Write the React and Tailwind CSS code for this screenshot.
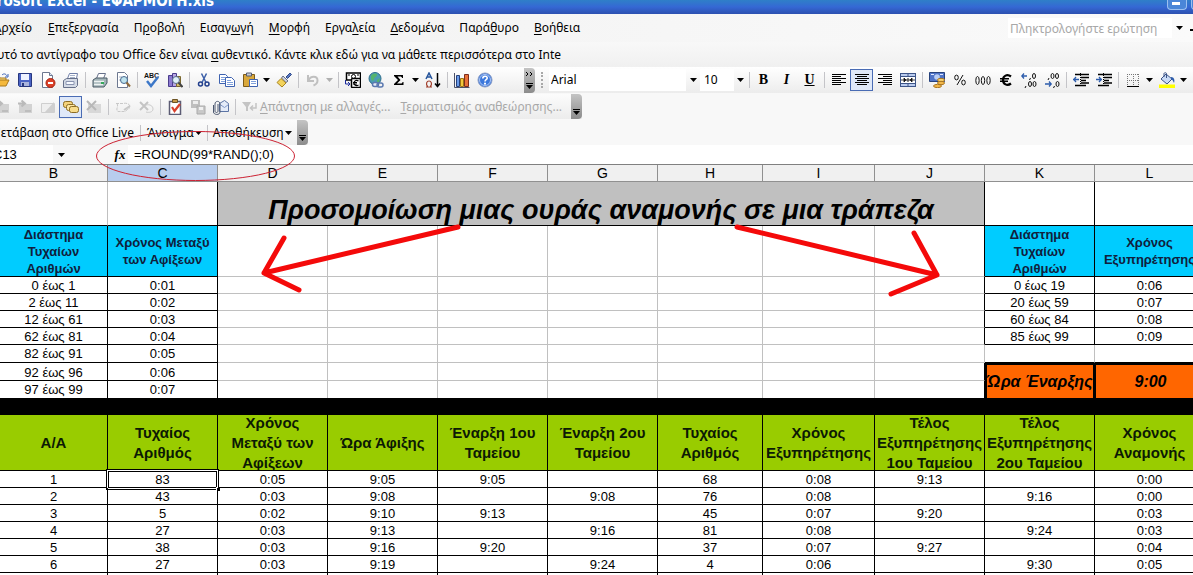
import React from "react";

const UI = "font-['Noto_Sans','Open_Sans',sans-serif]";

function Svg({ children, w = 16, h = 16 }) {
  return (
    <svg width={w} height={h} viewBox={`0 0 ${w} ${h}`} className="shrink-0" aria-hidden="true">
      {children}
    </svg>
  );
}

const Tri = ({ color = "#000" }) => (
  <Svg w={7} h={4}>
    <path d="M0 0h7L3.5 4z" fill={color} />
  </Svg>
);

const textLines = (rows) =>
  rows.map(([x, w], i) => <rect key={i} x={x} y={2 + i * 2} width={w} height="1" fill="#000" />);

const icons = {
  open: (
    <Svg>
      <path d="M1 14V4h4l1 2h6v3" fill="#fbe08a" stroke="#a9781b" />
      <path d="M1 14l3-6h11l-3 6z" fill="#f5b93c" stroke="#a9781b" />
      <path d="M8 3c2-2 4-1 5 1M14 2v3h-3" fill="none" stroke="#3a62b8" />
    </Svg>
  ),
  save: (
    <Svg>
      <path d="M1.5 1.5h13v13h-12l-1-1z" fill="#4a63c4" stroke="#27377f" />
      <rect x="4" y="2" width="8" height="6" fill="#eef2ff" />
      <rect x="4" y="10" width="8" height="4" fill="#aab4dc" />
      <rect x="5" y="11" width="2" height="3" fill="#27377f" />
    </Svg>
  ),
  permission: (
    <Svg>
      <path d="M2.5.5h7l3 3v12h-10z" fill="#fff" stroke="#6d7890" />
      <path d="M9.5.5v3h3" fill="#dde6f5" stroke="#6d7890" />
      <circle cx="10.500" cy="11" r="4.500" fill="#dc4028" stroke="#a82512" />
      <rect x="8" y="10" width="5" height="2" fill="#fff" />
    </Svg>
  ),
  fax: (
    <Svg>
      <path d="M4.5 6.5l2-5h8l-1 5" fill="#fff" stroke="#6f7ea8" />
      <path d="M7 3.5h5M7 5.5h5" stroke="#a8b4cc" />
      <path d="M.5 8.5l3-2h11v7l-2 2H.5z" fill="#d5dbe6" stroke="#66708a" />
      <path d="M3 9.5h8v3H3z" fill="#f6f9ff" stroke="#8a94b0" />
    </Svg>
  ),
  print: (
    <Svg>
      <path d="M4.5 6.5l2-5h7l-2 5" fill="#fff" stroke="#66708a" />
      <path d="M1 8l3-2h11v5l-3 4H1z" fill="#a3b4b8" stroke="#4a5a66" />
      <path d="M2 9.5h10M2 12.5h9" stroke="#eef2f2" strokeWidth="1.5" />
      <rect x="9" y="10" width="3" height="2" fill="#35a85b" />
    </Svg>
  ),
  preview: (
    <Svg>
      <path d="M2.5.5h7l3 3v12h-10z" fill="#fff" stroke="#6d7890" />
      <path d="M4 5h3M4 8h2" stroke="#a9b3c6" />
      <circle cx="9" cy="8" r="3.5" fill="#bfe3ee" stroke="#4a6a90" />
      <path d="M11.5 10.5L15 14.5" stroke="#8d6a3c" strokeWidth="2" />
    </Svg>
  ),
  spelling: (
    <Svg>
      <text x="0" y="6" fontSize="7" fontWeight="700" fontFamily="Liberation Sans" fill="#111">ABC</text>
      <path d="M3 9l4 5 7-9" fill="none" stroke="#3d78c8" strokeWidth="2.5" />
    </Svg>
  ),
  research: (
    <Svg>
      <path d="M1.5 3.5h4v11h-4z" fill="#8c7ad0" stroke="#4a3c8c" />
      <path d="M5.5 1.5h4v13h-4z" fill="#b9a7e4" stroke="#4a3c8c" />
      <path d="M9.500 4.500h4v10h-4z" fill="#d8c06a" stroke="#7a6830" />
      <circle cx="9" cy="8" r="3.500" fill="#dff0f8" stroke="#56698c" />
      <path d="M11.500 10.500l4 4.500" stroke="#444" strokeWidth="2" />
    </Svg>
  ),
  cut: (
    <Svg>
      <path d="M5.500 1.500l4.500 9M10.500 1.500l-4.500 9" stroke="#3c5fa8" strokeWidth="1.500" />
      <circle cx="4.500" cy="12" r="2" fill="none" stroke="#223f8c" strokeWidth="1.500" />
      <circle cx="11" cy="12" r="2" fill="none" stroke="#223f8c" strokeWidth="1.500" />
    </Svg>
  ),
  copy: (
    <Svg>
      <path d="M.5 2.500h6l2 2v7h-8z" fill="#fff" stroke="#3e62b0" />
      <path d="M2 5.500h4M2 7.500h5M2 9.500h5" stroke="#7fa0dc" />
      <path d="M6.500 5.500h6l3 3v6h-9z" fill="#fff" stroke="#3e62b0" />
      <path d="M8 8.500h4M8 10.500h6M8 12.500h6" stroke="#7fa0dc" />
    </Svg>
  ),
  paste: (
    <Svg>
      <path d="M1.500 2.500h11v12h-11z" fill="#d9a83c" stroke="#7c5a18" />
      <path d="M4.500 1h5v3h-5z" fill="#c9ccd4" stroke="#555c70" />
      <path d="M7.500 7.500h8v7h-8z" fill="#fff" stroke="#3e62b0" />
      <path d="M9 9.500h5M9 11.500h5" stroke="#7fa0dc" />
    </Svg>
  ),
  brush: (
    <Svg>
      <path d="M10 5l4-4 1.500 1.500-4 4z" fill="#5a78c0" stroke="#2f4a8c" />
      <path d="M7 4l5 5-2 1.500L5.500 6z" fill="#d0d4e0" stroke="#6a7288" />
      <path d="M5 6.500l5 4.500-4 4-5-4.500z" fill="#f3d35c" stroke="#a88420" />
    </Svg>
  ),
  undo: (
    <Svg>
      <path d="M3 3v6h6M3.500 8.500c2-5 9-5 9 0 0 2-1.500 4-4 5" fill="none" stroke="#c0c0c0" strokeWidth="2" />
    </Svg>
  ),
  euroConvert: (
    <Svg>
      <rect x="1.500" y="1" width="14" height="7" fill="#fff" stroke="#000" strokeWidth="1.500" />
      <circle cx="8.500" cy="4.500" r="2" fill="none" stroke="#000" />
      <path d="M3 3h2M12 3h2" stroke="#000" />
      <rect x="6.500" y="6.500" width="9" height="9" rx="1" fill="#fff" stroke="#000" strokeWidth="1.500" />
      <path d="M13.500 9c-2.500-1.500-4.500 0-4.500 2s2 3.500 4.500 2M8 10.500h4M8 12h4" fill="none" stroke="#000" strokeWidth="1.200" />
      <path d="M.5 8v4h4M3 10l2 2-2 2" fill="none" stroke="#1b2a9c" />
    </Svg>
  ),
  globe: (
    <Svg>
      <circle cx="7" cy="6.500" r="6" fill="#4c9cb4" stroke="#2c6c8c" />
      <path d="M3 4c2-3 6-3 6-1s-3 2-3 4-2 2-3 0zM9 8l3-2-1 4-2 1z" fill="#54b46c" />
      <rect x="4.500" y="10.500" width="6" height="4" rx="2" fill="#e6ecf8" stroke="#5a78b0" strokeWidth="1.500" />
      <rect x="9" y="11" width="6" height="4" rx="2" fill="none" stroke="#5a78b0" strokeWidth="1.500" />
    </Svg>
  ),
  sigma: (
    <Svg>
      <path d="M3 3h9v3h-1c0-1-1-1.500-2-1.500H6.500L9.500 8l-3.500 3.500h3.500c1 0 2-.5 2-1.500h1v3H3v-1l4-4-4-4z" fill="#000" />
    </Svg>
  ),
  sort: (
    <Svg>
      <path d="M1 7l3-6 3 6M2.500 5h3" fill="none" stroke="#27559c" strokeWidth="1.500" />
      <path d="M1 15h2c-3-3-1-6 1-6s4 3 1 6h2" fill="none" stroke="#a03c28" strokeWidth="1.200" />
      <path d="M12.500 1v13M10 11.500l2.500 3 2.500-3" fill="none" stroke="#000" strokeWidth="1.500" />
    </Svg>
  ),
  chart: (
    <Svg>
      <path d="M.5 1v14.500H15.500" fill="none" stroke="#4a5068" />
      <path d="M2.500 3.500h3v11h-3z" fill="#6a9ae8" stroke="#27427c" />
      <path d="M6.500 6.500h3v8h-3z" fill="#f4c83c" stroke="#9c7414" />
      <path d="M10.500 2.500h4v12h-4z" fill="#e87038" stroke="#7c2c1c" />
    </Svg>
  ),
  help: (
    <Svg>
      <circle cx="8" cy="8" r="7" fill="#3c78dc" stroke="#8a9cc4" />
      <circle cx="8" cy="8" r="5.500" fill="none" stroke="#dce8ff" strokeWidth=".7" />
      <path d="M5.800 6.500c0-3 4.400-3 4.400-.5 0 1.600-2.200 1.600-2.200 3.400" fill="none" stroke="#fff" strokeWidth="1.600" />
      <rect x="7" y="10.700" width="2" height="1.800" fill="#fff" />
    </Svg>
  ),
  left: <Svg>{textLines([[1, 14], [1, 9], [1, 14], [1, 9], [1, 14], [1, 9]])}</Svg>,
  center: <Svg>{textLines([[1, 14], [3, 10], [1, 14], [3, 10], [1, 14], [3, 10]])}</Svg>,
  right: <Svg>{textLines([[1, 14], [6, 9], [1, 14], [6, 9], [1, 14], [6, 9]])}</Svg>,
  merge: (
    <Svg>
      <rect x=".5" y="1.500" width="15" height="13" fill="#b9cbee" stroke="#3c5488" />
      <path d="M1 4.500h14M1 11.500h14M8 2v2.500M8 12v2.500" stroke="#3c5488" />
      <rect x="1" y="5" width="14" height="6" fill="#fff" />
      <path d="M1 8h4M15 8h-4M4 6v4l2-2zM12 6v4l-2-2z" stroke="#111" strokeWidth=".8" fill="#111" />
      <circle cx="8" cy="8" r="1.200" fill="none" stroke="#111" />
    </Svg>
  ),
  currency: (
    <Svg>
      <path d="M.5.5h15v9H.5z" fill="#4f74c8" stroke="#27427c" />
      <circle cx="8" cy="5" r="2.800" fill="#b9cdf4" />
      <path d="M2 2.500h3M11 2.500h3" stroke="#dfe8ff" />
      <ellipse cx="12" cy="8" rx="3.500" ry="1.700" fill="#f7d372" stroke="#a87420" />
      <ellipse cx="12" cy="11" rx="3.500" ry="1.700" fill="#f2b84a" stroke="#a87420" />
      <ellipse cx="8.500" cy="14" rx="4" ry="1.600" fill="#f2b84a" stroke="#a87420" />
    </Svg>
  ),
  percent: (
    <Svg>
      <path d="M11 3L5 13" stroke="#111" />
      <ellipse cx="4.500" cy="5.500" rx="1.800" ry="2.400" fill="none" stroke="#111" />
      <ellipse cx="11.500" cy="10.500" rx="1.800" ry="2.400" fill="none" stroke="#111" />
    </Svg>
  ),
  thousands: (
    <Svg>
      {[2.5, 8, 13.5].map((x) => (
        <ellipse key={x} cx={x} cy="8.500" rx="1.700" ry="4" fill="none" stroke="#111" />
      ))}
    </Svg>
  ),
  euro: (
    <Svg>
      <path d="M13 4.500C9 1.500 5 4 5 8s4 6.500 8 3.500" fill="none" stroke="#000" strokeWidth="2.200" />
      <path d="M2 6.700h9M2 9.300h8" stroke="#000" strokeWidth="1.400" />
    </Svg>
  ),
  addDecimal: (
    <Svg>
      <path d="M1 4h5M3 1.500L.8 4 3 6.500" fill="none" stroke="#2c5cac" strokeWidth="1.300" />
      <ellipse cx="13" cy="4" rx="1.500" ry="2.500" fill="none" stroke="#111" />
      <ellipse cx="9" cy="12" rx="1.500" ry="2.500" fill="none" stroke="#111" />
      <ellipse cx="13.500" cy="12" rx="1.500" ry="2.500" fill="none" stroke="#111" />
      <path d="M9.500 6l-1 2M5 14l-1 2" stroke="#111" />
    </Svg>
  ),
  removeDecimal: (
    <Svg>
      <path d="M1 12h6M5 9.500L7.200 12 5 14.500" fill="none" stroke="#2c5cac" strokeWidth="1.300" />
      <ellipse cx="8.500" cy="4" rx="1.500" ry="2.500" fill="none" stroke="#111" />
      <ellipse cx="13" cy="4" rx="1.500" ry="2.500" fill="none" stroke="#111" />
      <ellipse cx="13.500" cy="12" rx="1.500" ry="2.500" fill="none" stroke="#111" />
      <path d="M5 6l-1 2M10.500 14l-1 2" stroke="#111" />
    </Svg>
  ),
  outdent: (
    <Svg>
      <path d="M2 2.500h14M8 5.500h8M8 8.500h5M8 11h8M2 13.500h11" stroke="#000" strokeWidth="1.500" />
      <path d="M0 7.500h6M3 5L.8 7.500 3 10" fill="none" stroke="#2c5cac" strokeWidth="1.300" />
      <path d="M7.500 1v14" stroke="#000" strokeDasharray="1 1" />
    </Svg>
  ),
  indent: (
    <Svg>
      <path d="M2 2.500h14M8 5.500h8M8 8.500h5M8 11h8M2 13.500h11" stroke="#000" strokeWidth="1.500" />
      <path d="M0 7.500h6M3 5l2.200 2.500L3 10" fill="none" stroke="#2c5cac" strokeWidth="1.300" />
      <path d="M7.500 1v14" stroke="#000" strokeDasharray="1 1" />
    </Svg>
  ),
  borders: (
    <Svg>
      <path d="M2 2.500h12M2 8.500h12M2.500 2v12M8.500 2v12M13.500 2v12" stroke="#777" strokeDasharray="1 1" />
      <path d="M2 14.500h12" stroke="#000" />
    </Svg>
  ),
  fill: (
    <Svg>
      <path d="M7 2l6 5-5 5-6-5z" fill="#c9daf5" stroke="#3c5488" />
      <path d="M5 5V1.500c0-1 2.500-1 2.500 0V6" fill="none" stroke="#3c5488" />
      <path d="M12 5c3 0 4 3 3 6-1-2-1-3-3-4z" fill="#2c5cac" />
      <rect x="0" y="12.500" width="16" height="3.500" fill="#ffff00" />
    </Svg>
  ),
  note: (
    <Svg>
      <path d="M2 5h13v9H2z" fill="#d2d2d2" />
      <path d="M1 4.500h6M4.500 1.500L8 4.500 4.500 7.500" fill="none" stroke="#bababa" strokeWidth="2" />
      <path d="M8 11h6v2H8z" fill="#bdbdbd" />
    </Svg>
  ),
  noteEdit: (
    <Svg>
      <path d="M1.500 4.500h13v9h-13z" fill="#efefef" stroke="#cfcfcf" />
      <path d="M14 3L5 13h9z" fill="#cfcfcf" />
    </Svg>
  ),
  notes: (
    <Svg>
      <rect x=".5" y="2.500" width="9" height="6" rx="2" fill="#f3d27c" stroke="#8c6c24" />
      <rect x="3.500" y="5.500" width="9" height="6" rx="2" fill="#fbe6a4" stroke="#8c6c24" />
      <rect x="6.500" y="7.500" width="9" height="6" rx="2" fill="#f7dc8c" stroke="#8c6c24" />
    </Svg>
  ),
  noteDelete: (
    <Svg>
      <path d="M2 5h13v9H2z" fill="#d8d8d8" />
      <path d="M1 2l9 9M10 2l-9 9" stroke="#b8b8b8" strokeWidth="2" />
    </Svg>
  ),
  ink: (
    <Svg>
      <path d="M1 4.500h7c4-1 7 1 7 3M2 4.500c2 3-2 6 1 8h7l5-4" fill="none" stroke="#c8c8c8" strokeDasharray="3 1" />
      <path d="M9 11l6-4" stroke="#c8c8c8" strokeWidth="2" />
    </Svg>
  ),
  inkDelete: (
    <Svg>
      <path d="M2 3l8 8M10 3l-8 8" stroke="#c4c4c4" strokeWidth="2" />
      <path d="M8 6c4-1 7 1 7 4s-4 4-7 3" fill="none" stroke="#ccc" />
    </Svg>
  ),
  task: (
    <Svg>
      <path d="M2.500 2.500h11v13h-11z" fill="#fff" stroke="#5c5c74" strokeWidth="1.500" />
      <path d="M5.500.5h5v3h-5z" fill="#c89848" stroke="#6c5424" />
      <path d="M5 8l2.500 4L13 5" fill="none" stroke="#d8402c" strokeWidth="2.200" />
    </Svg>
  ),
  update: (
    <Svg>
      <path d="M1 1h9v8H1z" fill="#bfbfbf" />
      <path d="M3 2h5v3H3z" fill="#eee" />
      <path d="M7 7h8v8H7z" fill="#c8c8c8" stroke="#aaa" />
      <path d="M9 8h4v3H9z" fill="#f0f0f0" />
    </Svg>
  ),
  mail: (
    <Svg>
      <path d="M6.500 4.500l5-3 4 3v8h-9z" fill="#e4ebf8" stroke="#5c74a4" />
      <path d="M7 5.500l4.500 3 4-3" fill="none" stroke="#7f97c8" />
      <path d="M5 5v7c0 2-3 2-3 0V5c0-3.500 5-3.500 5 0v8c0 3.500-6.500 3-6.500 0V6" fill="none" stroke="#4c5870" />
    </Svg>
  ),
  reply: (
    <Svg>
      <path d="M0 3h9L6 8v4H4V8z" fill="#c4c4c4" />
      <path d="M14 4v5H9M11 6.500L8.500 9l2.500 2.500" fill="none" stroke="#c4c4c4" strokeWidth="1.500" />
    </Svg>
  ),
  bold: <span className="font-['Liberation_Serif',serif] text-[14px] font-black">B</span>,
  italic: <span className="font-['Liberation_Serif',serif] text-[14px] font-bold italic">I</span>,
  underline: <span className="font-['Liberation_Serif',serif] text-[14px] font-bold underline">U</span>,
};

function Tool({ icon, label, active }) {
  return (
    <button
      type="button"
      aria-label={label}
      className={`flex h-[22px] w-[23px] shrink-0 items-center justify-center ${
        active ? "border border-[#4a6cb4] bg-[#dfe8f8]" : ""
      }`}
    >
      {icons[icon]}
    </button>
  );
}

const Drop = ({ label, color }) => (
  <button type="button" aria-label={label} className="flex h-[22px] w-[11px] shrink-0 items-center justify-center">
    <Tri color={color} />
  </button>
);

const Sep = () => (
  <span className="flex w-[6px] shrink-0 justify-center">
    <span className="h-4 w-px bg-[#c4c4c8]" />
  </span>
);

function More({ arrows }) {
  return (
    <button
      type="button"
      aria-label="Περισσότερα κουμπιά"
      className="flex h-[25px] w-[11px] shrink-0 flex-col items-center justify-between rounded-r bg-linear-to-b from-[#c4c4c4] to-[#8c8c8c] py-[4px]"
    >
      <Svg w={7} h={5}>{arrows && <path d="M0 0l2 2-2 2M4 0l2 2-2 2" stroke="#000" fill="none" />}</Svg>
      <Svg w={7} h={6}>
        <path d="M0 .5h7" stroke="#000" />
        <path d="M0 2h7L3.500 6z" fill="#000" />
      </Svg>
    </button>
  );
}

const menus = [
  ["", "Α", "ρχείο"],
  ["", "Ε", "πεξεργασία"],
  ["Π", "ρ", "οβολή"],
  ["Εισαγ", "ω", "γή"],
  ["", "Μ", "ορφή"],
  ["Εργα", "λ", "εία"],
  ["", "Δ", "εδομένα"],
  ["Παρά", "θ", "υρο"],
  ["", "Β", "οήθεια"],
];

function MenuButton({ parts }) {
  return (
    <button type="button" className="shrink-0 whitespace-nowrap">
      {parts[0]}
      <span className="underline underline-offset-2">{parts[1]}</span>
      {parts[2]}
    </button>
  );
}

const columns = [
  ["B", "w-[108px]"],
  ["C", "w-[110px]"],
  ["D", "w-[110px]"],
  ["E", "w-[110px]"],
  ["F", "w-[110px]"],
  ["G", "w-[110px]"],
  ["H", "w-[105px]"],
  ["I", "w-[112px]"],
  ["J", "w-[110px]"],
  ["K", "w-[110px]"],
  ["L", "w-[110px]"],
];

const GRAY = "border-r border-b border-[#c0c0c0]";
const BLACK = "border-r border-b border-black";
const EDGE = "border-r border-b border-r-black border-b-[#c0c0c0]";
const VALUE = "border-r border-b border-black px-0 pt-px pb-0 leading-[15px]";

const arrivals = [
  ["0 έως 1", "0:01", "0 έως 19", "0:06"],
  ["2 έως 11", "0:02", "20 έως 59", "0:07"],
  ["12 έως 61", "0:03", "60 έως 84", "0:08"],
  ["62 έως 81", "0:04", "85 έως 99", "0:09"],
];

const headings = [
  ["Α/Α"],
  ["Τυχαίος", "Αριθμός"],
  ["Χρόνος", "Μεταξύ των", "Αφίξεων"],
  ["Ώρα Άφιξης"],
  ["Έναρξη 1ου", "Ταμείου"],
  ["Έναρξη 2ου", "Ταμείου"],
  ["Τυχαίος", "Αριθμός"],
  ["Χρόνος", "Εξυπηρέτησης"],
  ["Τέλος", "Εξυπηρέτησης", "1ου Ταμείου"],
  ["Τέλος", "Εξυπηρέτησης", "2ου Ταμείου"],
  ["Χρόνος", "Αναμονής"],
];

const simulation = [
  ["1", "83", "0:05", "9:05", "9:05", "", "68", "0:08", "9:13", "", "0:00"],
  ["2", "43", "0:03", "9:08", "", "9:08", "76", "0:08", "", "9:16", "0:00"],
  ["3", "5", "0:02", "9:10", "9:13", "", "45", "0:07", "9:20", "", "0:03"],
  ["4", "27", "0:03", "9:13", "", "9:16", "81", "0:08", "", "9:24", "0:03"],
  ["5", "38", "0:03", "9:16", "9:20", "", "37", "0:07", "9:27", "", "0:04"],
  ["6", "27", "0:03", "9:19", "", "9:24", "4", "0:06", "", "9:30", "0:05"],
  ["", "", "", "", "", "", "", "", "", "", ""],
];

const blanks = (from, to) =>
  Array.from({ length: to - from }, (_, i) => (
    <td key={`blank${from + i}`} className={from + i === 8 ? EDGE : GRAY} />
  ));

const BlueHead = ({ lines }) => (
  <th scope="col" className={`${BLACK} bg-[#00ccff] p-0 font-bold text-[#10203c]`}>
    <div className="flex h-[50px] flex-col justify-center overflow-hidden leading-[17px]">
      {lines.map((l) => (
        <div key={l} className="shrink-0 whitespace-nowrap">{l}</div>
      ))}
    </div>
  </th>
);

function Sheet() {
  return (
    <table className="w-[1205px] table-fixed border-separate border-spacing-0 border-t border-[#808080] bg-white text-center font-['Liberation_Sans',Arial,sans-serif] text-[13px] leading-4 text-black">
      <thead>
        <tr className="h-[17px]">
          {columns.map(([c, w]) => (
            <th
              key={c}
              scope="col"
              className={`${w} border-r border-b border-[#909090] p-0 text-[14px] font-normal ${
                c === "C" ? "bg-[#b8cdee]" : "bg-[#f0f0f0]"
              }`}
            >
              {c}
            </th>
          ))}
        </tr>
      </thead>
      <tbody>
        <tr className="h-[44px]">
          <td className="border-r border-b border-r-[#c0c0c0] border-b-black" />
          <td className={BLACK} />
          <td colSpan={7} className={`${BLACK} bg-[#c0c0c0] p-0 align-bottom text-[27px] leading-[30px] font-bold whitespace-nowrap italic`}>
            Προσομοίωση μιας ουράς αναμονής σε μια τράπεζα
          </td>
          <td className={BLACK} />
          <td className={BLACK} />
        </tr>
        <tr className="h-[51px]">
          <BlueHead lines={["Διάστημα", "Τυχαίων", "Αριθμών"]} />
          <BlueHead lines={["Χρόνος Μεταξύ", "των Αφίξεων"]} />
          {blanks(2, 9)}
          <BlueHead lines={["Διάστημα", "Τυχαίων", "Αριθμών"]} />
          <BlueHead lines={["Χρόνος", "Εξυπηρέτησης"]} />
        </tr>
        {arrivals.map((r) => (
          <tr key={r[0]} className="h-[17px]">
            <td className={VALUE}>{r[0]}</td>
            <td className={VALUE}>{r[1]}</td>
            {blanks(2, 9)}
            <td className={VALUE}>{r[2]}</td>
            <td className={VALUE}>{r[3]}</td>
          </tr>
        ))}
        <tr className="h-[18px]">
          <td className={`${BLACK} p-0`}>82 έως 91</td>
          <td className={`${BLACK} p-0`}>0:05</td>
          {blanks(2, 8)}
          <td className={GRAY} />
          <td className="border-r border-b border-r-[#c0c0c0] border-b-black" />
          <td className="border-r border-b border-r-[#c0c0c0] border-b-black" />
        </tr>
        <tr className="h-[18px]">
          <td className={VALUE}>92 έως 96</td>
          <td className={VALUE}>0:06</td>
          {blanks(2, 9)}
          <td rowSpan={2} className="border-t-2 border-r-2 border-l-2 border-black bg-[#ff6600] p-0 text-[16px] font-bold whitespace-nowrap italic">
            Ώρα Έναρξης
          </td>
          <td rowSpan={2} className="border-t-2 border-l border-black bg-[#ff6600] p-0 text-[16px] font-bold italic">
            9:00
          </td>
        </tr>
        <tr className="h-[17px]">
          <td className="border-r border-black p-0">97 έως 99</td>
          <td className="border-r border-black p-0">0:07</td>
          {[2, 3, 4, 5, 6, 7].map((i) => (
            <td key={i} className="border-r border-[#c0c0c0]" />
          ))}
          <td className="border-r border-black" />
        </tr>
        <tr className="h-[17px]">
          <td colSpan={11} className="bg-black p-0" />
        </tr>
        <tr className="h-[56px]">
          {headings.map((lines, i) => (
            <th key={i} scope="col" className={`${BLACK} bg-[#99cc00] p-0 text-[15px] font-bold text-[#0c1a04]`}>
              <div className="flex h-[55px] flex-col items-center justify-center overflow-hidden leading-5">
                {lines.map((l) => (
                  <div key={l} className="shrink-0 whitespace-nowrap">{l}</div>
                ))}
              </div>
            </th>
          ))}
        </tr>
        {simulation.map((r, ri) => (
          <tr key={ri} className="h-[17px]">
            {r.map((v, ci) => (
              <td key={ci} className={`${VALUE} relative`}>
                {v}
                {ri === 0 && ci === 1 && (
                  <div className="absolute -inset-x-[2px] -top-[2px] -bottom-[3px] border border-black">
                    <div className="h-full border border-white">
                      <div className="h-full border border-black" />
                    </div>
                    <div className="absolute -right-[3px] -bottom-[3px] size-[5px] border border-white bg-black" />
                  </div>
                )}
              </td>
            ))}
          </tr>
        ))}
      </tbody>
    </table>
  );
}

function Annotations() {
  return (
    <svg width="1193" height="575" viewBox="0 0 1193 575" className="pointer-events-none absolute top-0 left-0" aria-hidden="true">
      <ellipse cx="195.500" cy="156" rx="99" ry="24.500" fill="none" stroke="#cc2233" strokeWidth="1" />
      <g fill="none" stroke="#f40a0a" strokeWidth="5" strokeLinecap="round" strokeLinejoin="round">
        <path d="M458 227L264 273M284 238L264 273L299 290" />
        <path d="M737 227L937 275M914 233L937 275L891 294" />
      </g>
    </svg>
  );
}

export default function App() {
  return (
    <div className={`relative h-screen overflow-hidden bg-[#f8f8f8] text-[12px] leading-4 text-black ${UI}`}>
      <header className="flex h-[14px] items-start justify-between overflow-hidden bg-linear-to-b from-[#2f7fc8] via-[#3568d4] to-[#2c50b0]">
        <h1 className="-mt-[7px] flex w-[214px] shrink-0 justify-end font-['DejaVu_Sans_Condensed','DejaVu_Sans',sans-serif] text-[15px] leading-4 font-bold whitespace-nowrap text-white">
          Microsoft Excel - ΕΦΑΡΜΟΓΗ.xls
        </h1>
        <div className="-mr-[18px] flex gap-1">
          <button type="button" aria-label="Ελαχιστοποίηση" className="flex h-[10px] w-5 items-start rounded-b-sm border border-t-0 border-[#9cc0f0] bg-[#4a86d8] px-1 pt-[2px]">
            <span className="h-[3px] w-2 bg-white" />
          </button>
          <button type="button" aria-label="Επαναφορά" className="h-[10px] w-5 rounded-b-sm border border-t-0 border-[#9cc0f0] bg-[#4a86d8]" />
        </div>
      </header>

      <nav className="flex h-[28px] items-center bg-linear-to-r from-[#f1f1f1] to-[#fafafa]">
        <div className="flex w-8 shrink-0 justify-end">
          <MenuButton parts={menus[0]} />
        </div>
        <div className="flex flex-1 gap-[15px] pl-4">
          {menus.slice(1).map((m) => (
            <MenuButton key={m[1]} parts={m} />
          ))}
        </div>
        <input
          type="text"
          aria-label="Πληκτρολογήστε ερώτηση"
          placeholder="Πληκτρολογήστε ερώτηση"
          className="h-5 w-[164px] bg-white px-[2px] placeholder:text-[#a8a8a8]"
        />
        <button type="button" aria-label="Λίστα ερωτήσεων" className="flex w-[15px] justify-center">
          <Tri />
        </button>
        <span className="mt-1 ml-[3px] h-[2px] w-[3px] bg-black" />
      </nav>

      <div className="flex h-[25px] items-center bg-linear-to-b from-[#f8f8f8] to-[#f0f0f0]">
        <a href="#genuine" className="flex w-[561px] justify-end whitespace-nowrap">
          <span>
            Αυτό το αντίγραφο του Office δεν είναι <u className="underline-offset-2">α</u>υθεντικό. Κάντε κλικ εδώ για να μάθετε περισσότερα στο Inte
          </span>
        </a>
      </div>

      <div className="flex h-[26px] items-center bg-linear-to-b from-white to-[#ececec]">
        <div className="-ml-[10px] flex items-center">
          <Tool icon="open" label="Άνοιγμα" />
          <Tool icon="save" label="Αποθήκευση" />
          <Tool icon="permission" label="Δικαιώματα" />
          <Tool icon="fax" label="Φαξ" />
          <Sep />
          <Tool icon="print" label="Εκτύπωση" />
          <Tool icon="preview" label="Προεπισκόπηση" />
          <Sep />
          <Tool icon="spelling" label="Ορθογραφία" />
          <Tool icon="research" label="Έρευνα" />
          <Sep />
          <Tool icon="cut" label="Αποκοπή" />
          <Tool icon="copy" label="Αντιγραφή" />
          <Tool icon="paste" label="Επικόλληση" />
          <Drop label="Επιλογές επικόλλησης" />
          <Tool icon="brush" label="Πινέλο μορφοποίησης" />
          <Sep />
          <Tool icon="undo" label="Αναίρεση" />
          <Drop label="Επιλογές αναίρεσης" color="#b0b0b0" />
          <Sep />
          <Tool icon="euroConvert" label="Μετατροπή ευρώ" />
          <Tool icon="globe" label="Υπερ-σύνδεση" />
          <Tool icon="sigma" label="Αυτόματη άθροιση" />
          <Drop label="Συναρτήσεις" />
          <Tool icon="sort" label="Ταξινόμηση" />
          <Sep />
          <Tool icon="chart" label="Γράφημα" />
          <Tool icon="help" label="Βοήθεια" />
        </div>
        <div className="ml-7 flex items-center">
          <More arrows />
          <span className="mx-[6px] h-4 border-l-2 border-dotted border-[#a8a8a8]" />
          <select aria-label="Γραμματοσειρά" className="h-[22px] w-[137px] appearance-none bg-white px-[2px] text-[12px]">
            <option>Arial</option>
          </select>
          <span className="flex w-[14px] justify-center"><Tri /></span>
          <select aria-label="Μέγεθος" className="h-[22px] w-[34px] appearance-none bg-white px-1 text-[12px]">
            <option>10</option>
          </select>
          <span className="flex w-[12px] justify-center"><Tri /></span>
          <Sep />
          <Tool icon="bold" label="Έντονα" />
          <Tool icon="italic" label="Πλάγια" />
          <Tool icon="underline" label="Υπογράμμιση" />
          <Sep />
          <Tool icon="left" label="Στοίχιση αριστερά" />
          <Tool icon="center" label="Στοίχιση στο κέντρο" active />
          <Tool icon="right" label="Στοίχιση δεξιά" />
          <Tool icon="merge" label="Συγχώνευση" />
          <Sep />
          <Tool icon="currency" label="Νόμισμα" />
          <Tool icon="percent" label="Ποσοστό" />
          <Tool icon="thousands" label="Χιλιάδες" />
          <Tool icon="euro" label="Ευρώ" />
          <Tool icon="addDecimal" label="Αύξηση δεκαδικών" />
          <Tool icon="removeDecimal" label="Μείωση δεκαδικών" />
          <Sep />
          <Tool icon="outdent" label="Μείωση εσοχής" />
          <Tool icon="indent" label="Αύξηση εσοχής" />
          <Sep />
          <Tool icon="borders" label="Περιγράμματα" />
          <Drop label="Επιλογές περιγράμματος" />
          <Tool icon="fill" label="Χρώμα γεμίσματος" />
          <Drop label="Επιλογές χρώματος" />
        </div>
      </div>

      <div className="flex h-[27px] items-center">
        <div className="flex items-center bg-linear-to-b from-[#fcfcfc] to-[#ececec] text-[#a8a8a8]">
          <div className="-ml-[10px] flex items-center">
            <Tool icon="note" label="Προηγούμενο σχόλιο" />
            <Tool icon="note" label="Επόμενο σχόλιο" />
            <Tool icon="noteEdit" label="Επεξεργασία σχολίου" />
            <Tool icon="notes" label="Εμφάνιση όλων" active />
            <Tool icon="noteDelete" label="Διαγραφή σχολίου" />
            <Sep />
            <Tool icon="ink" label="Γραφή" />
            <Tool icon="inkDelete" label="Διαγραφή γραφής" />
            <Sep />
            <Tool icon="task" label="Εργασία" />
            <Tool icon="update" label="Ενημέρωση" />
            <Tool icon="mail" label="Αποστολή" />
            <Sep />
          </div>
          <button type="button" className="ml-1 flex items-center gap-[2px] whitespace-nowrap">
            {icons.reply}
            <span><u className="underline-offset-2">Α</u>πάντηση με αλλαγές...</span>
          </button>
          <button type="button" className="mr-[9px] ml-[10px] whitespace-nowrap">
            <u className="underline-offset-2">Τ</u>ερματισμός αναθεώρησης...
          </button>
          <More />
        </div>
      </div>

      <div className="flex h-[25px] items-center">
        <div className="flex items-center bg-linear-to-b from-[#fcfcfc] to-[#f0f0f0]">
          <div className="flex w-[134px] shrink-0 justify-end overflow-hidden">
            <button type="button" className="shrink-0 whitespace-nowrap">Μετάβαση στο Office Live</button>
          </div>
          <span className="mx-[6px] h-4 w-px bg-[#c4c4c8]" />
          <button type="button" className="flex items-center gap-px">Άνοιγμα <Tri /></button>
          <span className="mx-[5px] h-4 w-px bg-[#c4c4c8]" />
          <button type="button" className="mr-[5px] flex items-center gap-px">Αποθήκευση <Tri /></button>
          <More />
        </div>
      </div>

      <div className="flex h-[19px] items-center font-['Liberation_Sans',Arial,sans-serif] text-[13px]">
        <input type="text" aria-label="Πλαίσιο ονόματος" defaultValue="C13" className="-ml-[7px] h-full w-[60px] bg-white" />
        <button type="button" aria-label="Λίστα ονομάτων" className="flex w-[17px] justify-center"><Tri /></button>
        <button type="button" aria-label="Εισαγωγή συνάρτησης" className="ml-[42px] w-4 text-center font-['Liberation_Serif',serif] text-[13px] font-bold italic">
          fx
        </button>
        <input type="text" aria-label="Γραμμή τύπων" defaultValue="=ROUND(99*RAND();0)" className="h-full min-w-0 flex-1 bg-white px-[6px]" />
      </div>

      <main className="overflow-hidden">
        <Sheet />
      </main>

      <Annotations />
    </div>
  );
}
